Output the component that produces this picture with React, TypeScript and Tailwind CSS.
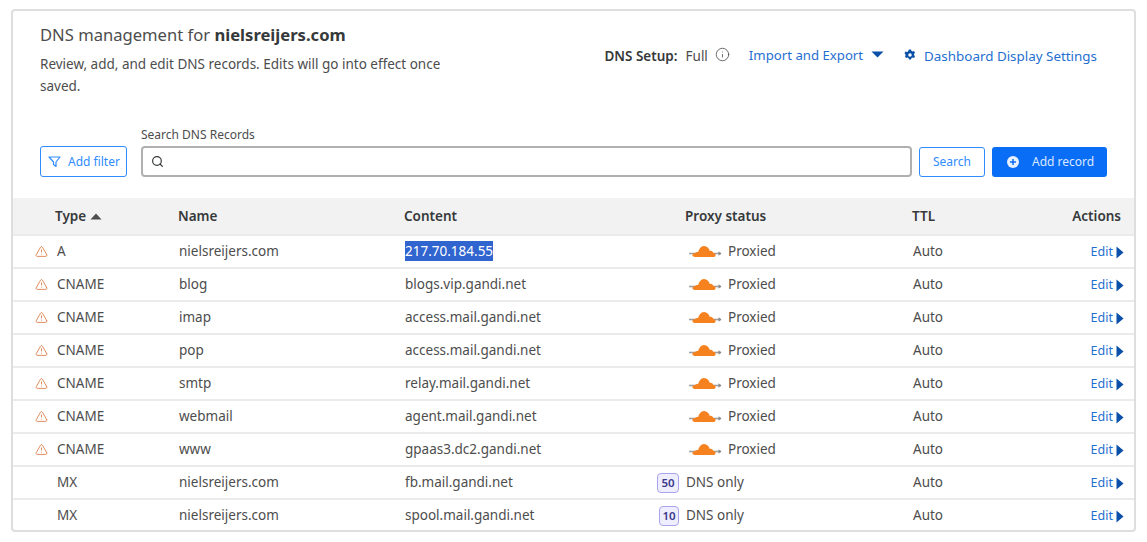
import React from 'react';
import { Search, Info, AlertTriangle } from 'lucide-react';

const font = "font-['Noto_Sans',sans-serif]";

interface DnsRecord {
  type: string;
  name: string;
  content: string;
  proxied: boolean;
  priority?: number;
  selected?: boolean;
}

const records: DnsRecord[] = [
  { type: 'A', name: 'nielsreijers.com', content: '217.70.184.55', proxied: true, selected: true },
  { type: 'CNAME', name: 'blog', content: 'blogs.vip.gandi.net', proxied: true },
  { type: 'CNAME', name: 'imap', content: 'access.mail.gandi.net', proxied: true },
  { type: 'CNAME', name: 'pop', content: 'access.mail.gandi.net', proxied: true },
  { type: 'CNAME', name: 'smtp', content: 'relay.mail.gandi.net', proxied: true },
  { type: 'CNAME', name: 'webmail', content: 'agent.mail.gandi.net', proxied: true },
  { type: 'CNAME', name: 'www', content: 'gpaas3.dc2.gandi.net', proxied: true },
  { type: 'MX', name: 'nielsreijers.com', content: 'fb.mail.gandi.net', proxied: false, priority: 50 },
  { type: 'MX', name: 'nielsreijers.com', content: 'spool.mail.gandi.net', proxied: false, priority: 10 },
];

const ProxyCloud = () => (
  <svg width="34" height="14" viewBox="0 0 34 14" className="mb-[2px] shrink-0">
    <path d="M1 9.5h32" stroke="#a0a0a0" strokeWidth="1.6" />
    <path d="M33.5 9.5l-3-2.200v4.400z" fill="#8a8a8a" />
    <path
      d="M7 13c-1.800 0-2.800-1-2.600-2.200.2-1.100 1.300-1.700 2.600-1.500.6-1 1.700-1.400 3-1.100C11 5.500 12.800 2 16 2c3 0 5 2.400 5.800 5 .9-.3 2-.2 2.600.4.500.4.800 1 .9 1.700 1.100 0 2.300.5 2.300 1.900 0 1.100-.7 2-1.800 2z"
      fill="#f6821f"
    />
  </svg>
);

const Row: React.FC<{ record: DnsRecord }> = ({ record }) => (
  <div className="flex h-[33px] items-center border-t-2 border-[#ebebeb] text-[13.5px] text-[#4d4d4d]">
    <div className="flex w-[165px] items-center pl-[22px]">
      <div className="w-[22px]">
        {record.proxied && <AlertTriangle size={13} strokeWidth={1.5} className="text-[#d9733a]" />}
      </div>
      <span>{record.type}</span>
    </div>
    <div className="w-[226px] pl-px">{record.name}</div>
    <div className="w-[251px] pl-px">
      {record.selected ? (
        <span className="bg-[#3064ce] py-[1px] text-white">{record.content}</span>
      ) : (
        record.content
      )}
    </div>
    <div className="flex w-[258px] items-center whitespace-nowrap">
      {record.proxied ? (
        <div className="ml-[33px] flex items-center gap-[6px]">
          <ProxyCloud />
          <span>Proxied</span>
        </div>
      ) : (
        <div className="flex items-center pl-[2px]">
          <span
            className={`flex h-[20px] items-center justify-center rounded-[4px] border border-[#a9a4ee] bg-[#eeeeff] text-[11.500px] font-semibold text-[#3c3a8a] ${
              record.priority === 10 ? 'ml-[2px] w-[20px]' : 'w-[22px]'
            }`}
          >
            {record.priority}
          </span>
          <span className="ml-[7px]">DNS only</span>
        </div>
      )}
    </div>
    <div className="w-[150px]">Auto</div>
    <div className="flex flex-1 items-center justify-end gap-[3px] pr-[10px] pt-px text-[12.500px] text-[#1f6fd0]">
      <span>Edit</span>
      <svg width="8" height="13" viewBox="0 0 8 13">
        <path d="M0.5 0.5L7.5 6.500L0.500 12.500z" fill="#0a50a8" />
      </svg>
    </div>
  </div>
);

export default function App() {
  return (
    <div className={`${font} h-[542px] w-[1147px] overflow-hidden bg-white px-[11px] pt-[9px]`}>
      <div className="h-[523px] overflow-hidden rounded-[4px] border-2 border-[#dedede]">
        <div className="flex justify-between pl-[27px] pr-[37px] pt-[12px]">
          <div className="w-[420px]">
            <h1 className="text-[16.600px] leading-[24px] text-[#4d4d4d]">
              DNS management for <b className="font-bold text-[#36393a]">nielsreijers.com</b>
            </h1>
            <p className="mt-[6px] text-[13.500px] leading-[22px] text-[#4d4d4d]">
              Review, add, and edit DNS records. Edits will go into effect once saved.
            </p>
          </div>
          <div className="flex h-[46px] items-center whitespace-nowrap pt-[20px] text-[13.500px]">
            <b className="font-semibold text-[#36393a]">DNS Setup:</b>
            <span className="ml-[8px] text-[#4d4d4d]">Full</span>
            <Info size={15} strokeWidth={1.3} className="mb-[3px] ml-[7px] text-[#4d4d4d]" />
            <span className="ml-[19px] text-[13.200px] text-[#1f6fd0]">Import and Export</span>
            <svg width="13" height="7" viewBox="0 0 13 7" className="mb-[3px] ml-[8px]">
              <path d="M0.500 0.500h12L6.500 6.500z" fill="#0a50a8" />
            </svg>
            <svg width="12" height="12" viewBox="0 0 24 24" className="mb-[2px] ml-[20px]">
              <path
                d="M10 1h4l1 3 2 1 3-1 2 3.500-2 2.500v2l2 2.500-2 3.500-3-1-2 1-1 3h-4l-1-3-2-1-3 1-2-3.500L3 13v-2L1 8.500 3 5l3 1 2-1zM12 8.500a3.500 3.500 0 100 7 3.500 3.500 0 000-7z"
                fill="#0a50a8"
                fillRule="evenodd"
              />
            </svg>
            <span className="ml-[8px] text-[13.400px] text-[#1f6fd0]">Dashboard Display Settings</span>
          </div>
        </div>
        <div className="flex items-end pl-[27px] pr-[27px] pt-[30px]">
          <button className="flex h-[31px] w-[87px] items-center gap-[7px] rounded-[3px] border border-[#2f8cff] pl-[7px] text-[12px] text-[#2f8cff]">
            <svg width="13" height="13" viewBox="0 0 13 13" fill="none">
              <path d="M1 2h11L8 7v4.500L5.500 9.500V7z" stroke="#2f8cff" strokeWidth="1.200" strokeLinejoin="round" />
            </svg>
            Add filter
          </button>
          <div className="ml-[14px] flex-1">
            <div className="mb-[3px] text-[12px] leading-[16px] text-[#4d4d4d]">Search DNS Records</div>
            <div className="flex h-[31px] items-center rounded-[4px] border-2 border-[#b0b0b0] pl-[8px]">
              <Search size={13} strokeWidth={2.2} className="text-[#36393a]" />
            </div>
          </div>
          <button className="ml-[7px] h-[30px] w-[66px] rounded-[3px] border border-[#2f8cff] text-[12px] text-[#2f8cff]">
            Search
          </button>
          <button className="ml-[7px] flex h-[30px] w-[115px] items-center rounded-[3px] bg-[#0a6df5] pl-[15px] text-[12px] text-[#d9e8ff]">
            <svg width="12" height="12" viewBox="0 0 12 12">
              <circle cx="6" cy="6" r="6" fill="#e8f1ff" />
              <path d="M6 3v6M3 6h6" stroke="#0a6df5" strokeWidth="1.500" />
            </svg>
            <span className="ml-[13px]">Add record</span>
          </button>
        </div>
        <div className="mt-[21px] flex h-[36px] items-center bg-[#f2f2f2] text-[13.500px] font-semibold text-[#36393a]">
          <div className="flex w-[165px] items-center gap-[4px] pl-[42px]">
            Type
            <svg width="12" height="7" viewBox="0 0 12 7">
              <path d="M6 0.500L11.500 6.500H0.500z" fill="#4d4d4d" />
            </svg>
          </div>
          <div className="w-[226px]">Name</div>
          <div className="w-[281px]">Content</div>
          <div className="w-[227px]">Proxy status</div>
          <div className="w-[99px]">TTL</div>
          <div className="flex-1 pr-[13px] text-right">Actions</div>
        </div>
        {records.map((record, i) => (
          <Row key={i} record={record} />
        ))}
      </div>
    </div>
  );
}
